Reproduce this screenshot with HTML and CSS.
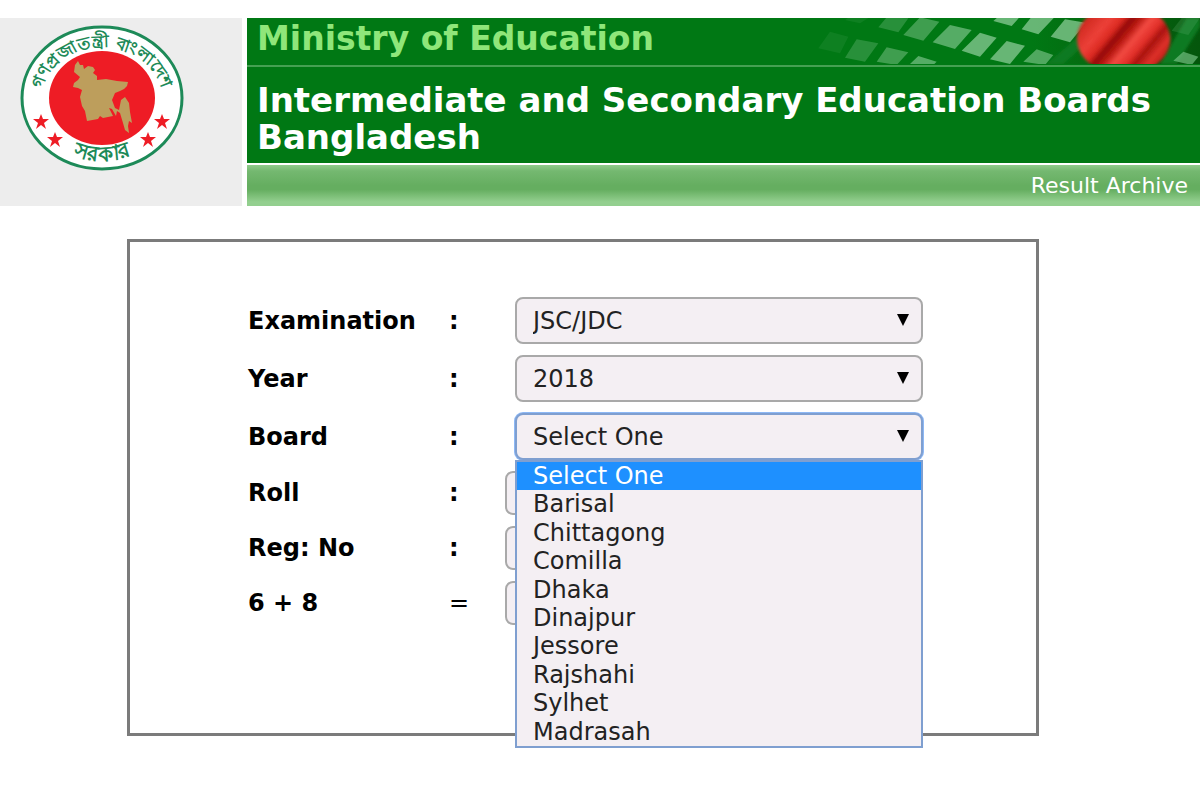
FILE: index.html
```html
<!DOCTYPE html>
<html lang="en">
<head>
<meta charset="UTF-8" />
<meta name="viewport" content="width=device-width, initial-scale=1.0" />
<title>Intermediate and Secondary Education Boards Bangladesh</title>
<link rel="stylesheet" href="styles.css">
</head>
<body>

<header class="header">
  <div class="logo">
    <svg class="seal" viewBox="0 0 164 146" role="img" aria-label="Government seal">
      <ellipse cx="82" cy="73" rx="80" ry="71" fill="#fff" stroke="#1d8a58" stroke-width="3"/>
      <ellipse cx="82" cy="73" rx="53" ry="47" fill="#ee1c25"/>
      <path fill="#bd9e5c" d="M58 36L60 40L63 40L64 44L68 41L73 42L75 45L73 48L77 51L77 55L86 54L97 56L108 57L107 61L104 64L100 66L95 68L92 75L95 83L99 85L101 75L105 72L109 78L110 87L112 98L109 96L108 101L109 108L105 105L103 98L100 88L97 86L96 91L92 84L89 83L93 91L83 93L80 91L78 94L67 96L65 86L62 81L60 72L62 65L58 63L53 62L54 58L58 55L60 52L54 47L55 40Z"/>
      <path id="arcTop" fill="none" d="M22 86A61 54 0 1 1 142 86"/>
      <path id="arcBottom" fill="none" d="M25 110A70 62 0 0 0 139 110"/>
      <text class="seal-text"><textPath href="#arcTop" startOffset="50%" text-anchor="middle">গণপ্রজাতন্ত্রী বাংলাদেশ</textPath></text>
      <text class="seal-text seal-text-large"><textPath href="#arcBottom" startOffset="50%" text-anchor="middle">সরকার</textPath></text>
      <g fill="#ee1c25">
        <path id="star" d="M21 89l2 5 6 0-5 4 2 6-5-4-5 4 2-6-5-4 6 0z"/>
        <use href="#star" x="14" y="18"/>
        <use href="#star" x="107" y="18"/>
        <use href="#star" x="121"/>
      </g>
    </svg>
  </div>
  <div class="banner">
    <div class="ministry">
      <span>Ministry of Education</span>
      <svg class="flag" viewBox="0 24 1260 138" aria-hidden="true">
        <defs>
          <linearGradient id="fade" x1="0" x2="1" y1="0" y2="0">
            <stop offset="0" stop-color="#007814"/>
            <stop offset=".6" stop-color="#007814"/>
            <stop offset=".75" stop-color="#056a10"/>
            <stop offset="1" stop-color="#04560c"/>
          </linearGradient>
          <linearGradient id="sun" gradientUnits="userSpaceOnUse" x1="930" y1="20" x2="1120" y2="180">
            <stop offset="0" stop-color="#d22b22"/>
            <stop offset=".2" stop-color="#ec4038"/>
            <stop offset=".32" stop-color="#dc2a22"/>
            <stop offset=".4" stop-color="#930a08"/>
            <stop offset=".48" stop-color="#b81812"/>
            <stop offset=".58" stop-color="#f24a42"/>
            <stop offset=".7" stop-color="#e02e28"/>
            <stop offset=".78" stop-color="#a8140e"/>
            <stop offset=".9" stop-color="#de302a"/>
            <stop offset="1" stop-color="#c22018"/>
          </linearGradient>
          <filter id="soft"><feGaussianBlur stdDeviation="4"/></filter>
        </defs>
        <rect y="24" width="1260" height="138" fill="url(#fade)"/>
        <g filter="url(#soft)" fill="#117a20">
          <path d="M800 162L960 24H1000L850 162ZM1140 162L1220 24H1260V50L1190 162Z"/>
        </g>
        <g fill="#72bd80">
          <path opacity=".12" d="M150 65L205 80L180 130L115 115ZM210 20L265 24L240 40L195 30Z"/>
          <path opacity=".35" d="M230 88L295 100L255 155L195 143ZM320 22L385 25L355 67L295 52Z"/>
          <path opacity=".55" d="M320 112L385 127L350 165L290 155ZM420 22L478 35L430 92L370 75Z"/>
          <path opacity=".75" d="M415 138L470 155L460 165L390 162ZM510 45L575 60L525 117L458 97Z"/>
          <path opacity=".9" d="M600 68L650 83L600 140L545 122ZM680 93L735 107L690 162L630 148ZM655 20L720 20L695 48L640 33ZM755 20L825 20L775 73L725 58ZM855 28L918 38L870 97L812 80Z"/>
          <path opacity=".7" d="M770 118L820 135L795 165L730 155ZM1210 125L1255 140L1235 165L1180 152Z"/>
          <path opacity=".2" d="M1205 24L1260 24L1225 75L1175 62Z"/>
        </g>
        <ellipse cx="1031" cy="88" rx="140" ry="106" fill="url(#sun)" filter="url(#soft)"/>
      </svg>
    </div>
    <h1>Intermediate and Secondary Education Boards Bangladesh</h1>
    <nav class="menu"><a href="#">Result Archive</a></nav>
  </div>
</header>

<form class="result-form">
  <div class="row">
    <label for="exam">Examination</label>
    <b>:</b>
    <div class="select-box">
      <select id="exam"><option>JSC/JDC</option></select>
    </div>
  </div>
  <div class="row">
    <label for="year">Year</label>
    <b>:</b>
    <div class="select-box">
      <select id="year"><option>2018</option></select>
    </div>
  </div>
  <div class="row">
    <label for="board">Board</label>
    <b>:</b>
    <div class="select-box open">
      <select id="board"><option>Select One</option></select>
      <ul class="options">
        <li class="selected">Select One</li>
        <li>Barisal</li>
        <li>Chittagong</li>
        <li>Comilla</li>
        <li>Dhaka</li>
        <li>Dinajpur</li>
        <li>Jessore</li>
        <li>Rajshahi</li>
        <li>Sylhet</li>
        <li>Madrasah</li>
      </ul>
    </div>
  </div>
  <div class="row">
    <label for="roll">Roll</label>
    <b>:</b>
    <input type="text" id="roll">
  </div>
  <div class="row">
    <label for="reg">Reg: No</label>
    <b>:</b>
    <input type="text" id="reg">
  </div>
  <div class="row">
    <label for="sum">6 + 8</label>
    <b class="equals">=</b>
    <input type="text" id="sum">
  </div>
</form>

</body>
</html>
```

FILE: styles.css
```css
* {
  box-sizing: border-box;
}
body {
  display: flow-root;
  min-height: 100vh;
  margin: 0;
  background-color: #fff;
  font-family: Verdana, "DejaVu Sans", sans-serif;
  font-size: 24px;
}

/* Header */
.header {
  display: grid;
  grid-template-columns: 242px 1fr;
  gap: 5px;
  margin-top: 18px;
}
.logo {
  background-color: #ededed;
  padding: 7px 20px;
}
.seal {
  display: block;
  width: 164px;
}
.seal-text {
  font-size: 17px;
  font-weight: bold;
  fill: #1d8a58;
}
.seal-text-large {
  font-size: 21px;
}
.ministry {
  display: flex;
  justify-content: space-between;
  height: 47px;
  padding-left: 10px;
  background-color: #007814;
  color: #8fe67a;
  font-size: 33px;
  font-weight: bold;
  line-height: 42px;
  white-space: nowrap;
}
.flag {
  width: 420px;
  height: 46px;
  margin-left: -200px;
}
h1 {
  margin: 0;
  padding: 15px 10px 7px;
  background-color: #007814;
  border-top: 2px solid #45a052;
  color: #fff;
  font-size: 34px;
  line-height: 37px;
}
.menu {
  margin-top: 2px;
  padding: 0 12px;
  background: linear-gradient(#8fcb8b, #74b870 15%, #65ae60 50%, #65ae60 60%, #93cf8f 90%);
  text-align: right;
  font-size: 22px;
  line-height: 41px;
}
.menu a {
  color: #fff;
  text-decoration: none;
}

/* Form */
.result-form {
  display: flex;
  flex-direction: column;
  gap: 11px;
  width: 76%;
  margin: 33px auto 0 127px;
  padding: 55px 113px 108px 118px;
  border: 3px solid #7b7b7b;
}
.row {
  display: grid;
  grid-template-columns: 201px 56px 1fr;
  align-items: center;
}
.row label {
  font-weight: bold;
}
.equals {
  font-weight: normal;
}
select,
input {
  display: block;
  font: inherit;
  color: #222;
  background-color: #f4eff3;
  border: 2px solid #a9a9a9;
  border-radius: 8px;
}
input {
  width: 320px;
  height: 44px;
  padding: 0 14px;
}
select {
  width: 100%;
  height: 47px;
  padding: 0 16px;
  appearance: none;
}
.select-box {
  position: relative;
  margin-left: 10px;
}
.select-box::after {
  content: "";
  position: absolute;
  top: 17px;
  right: 14px;
  border: 6px solid transparent;
  border-top: 12px solid #000;
  border-bottom: 0;
  pointer-events: none;
}
.open select {
  border-color: #7f9fd0;
  box-shadow: 0 0 0 1px #8db8f5;
}
.options {
  position: absolute;
  top: 47px;
  left: 0;
  right: 0;
  z-index: 1;
  display: grid;
  grid-auto-rows: 1fr;
  height: 288px;
  margin: 0;
  padding: 0;
  list-style: none;
  background-color: #f4eff3;
  border: 2px solid #7f9fd0;
  line-height: 28px;
  color: #222;
}
.options li {
  padding-left: 16px;
}
.options .selected {
  background-color: #1e90ff;
  color: #fff;
}
```
